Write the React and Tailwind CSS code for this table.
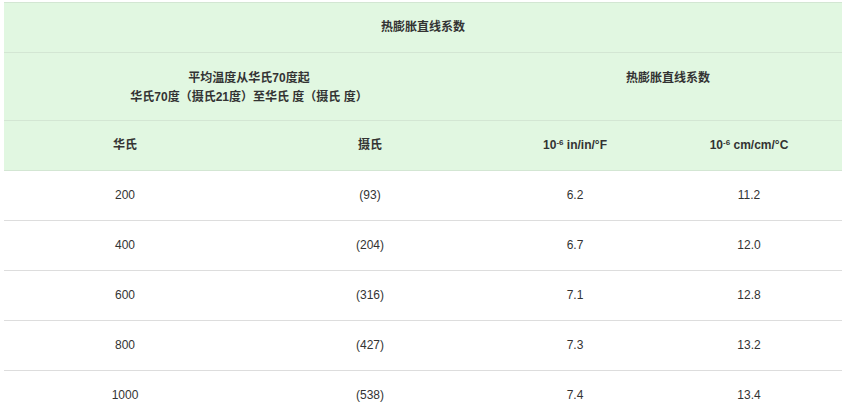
const rows = [
  ["200", "(93)", "6.2", "11.2"],
  ["400", "(204)", "6.7", "12.0"],
  ["600", "(316)", "7.1", "12.8"],
  ["800", "(427)", "7.3", "13.2"],
  ["1000", "(538)", "7.4", "13.4"],
];

const App = () => {
  return (
    <div
      className="min-h-screen bg-white pt-[2px] pl-[4px] text-[#333]"
      style={{ fontFamily: '"Liberation Sans", Arial, "Noto Sans CJK SC", sans-serif' }}
    >
      <table className="w-[838px] border-collapse table-fixed text-[12px] leading-[19px]">
        <colgroup>
          <col className="w-[242px]" />
          <col className="w-[248px]" />
          <col className="w-[162px]" />
          <col className="w-[186px]" />
        </colgroup>
        <thead className="bg-[#e1f7e1]">
          <tr className="border-t border-b border-[#d3e6d3]">
            <th colSpan={4} className="h-[50px] text-center font-bold">
              热膨胀直线系数
            </th>
          </tr>
          <tr className="border-b border-[#d3e6d3]">
            <th colSpan={2} className="h-[68px] align-top pt-[16px] text-center font-bold">
              平均温度从华氏70度起
              <br />
              华氏70度（摄氏21度）至华氏 度（摄氏 度）
            </th>
            <th colSpan={2} className="align-top pt-[16px] text-center font-bold">
              热膨胀直线系数
            </th>
          </tr>
          <tr className="border-b border-[#d3e6d3]">
            <th className="h-[50px] text-center font-bold">华氏</th>
            <th className="text-center font-bold">摄氏</th>
            <th className="text-center font-bold">
              10<sup className="text-[8px]">-6</sup> in/in/°F
            </th>
            <th className="text-center font-bold">
              10<sup className="text-[8px]">-6</sup> cm/cm/°C
            </th>
          </tr>
        </thead>
        <tbody>
          {rows.map((r, i) => (
            <tr key={i} className="border-b border-[#dddddd]">
              {r.map((c, j) => (
                <td key={j} className="h-[50px] text-center">
                  {c}
                </td>
              ))}
            </tr>
          ))}
        </tbody>
      </table>
    </div>
  );
};

export default App;
